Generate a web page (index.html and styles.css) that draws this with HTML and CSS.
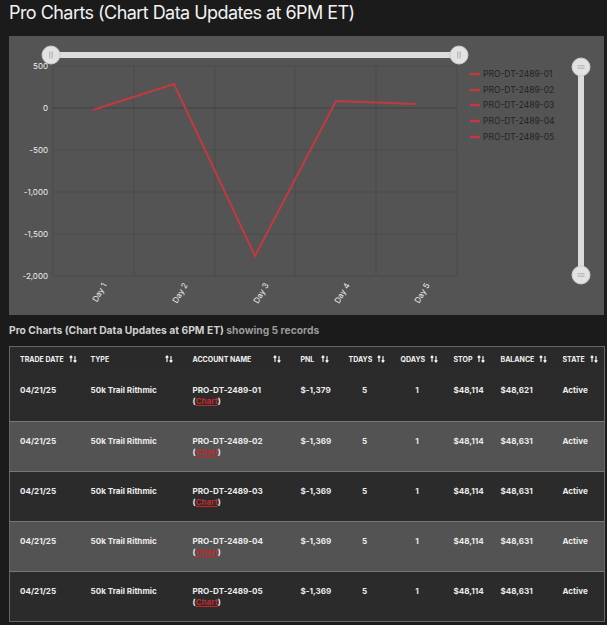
FILE: index.html
```html
<!DOCTYPE html>
<html lang="en">
<head>
  <meta charset="UTF-8">
  <title>Pro Charts</title>
  <link rel="stylesheet" href="styles.css">
</head>
<body>
  <h1>Pro Charts (Chart Data Updates at 6PM ET)</h1>

  <div class="chart-panel">
    <svg class="chart" width="595" height="279" viewBox="0 0 595 279">
      <!-- grid -->
      <g class="grid">
        <line x1="44" y1="30" x2="448" y2="30"/>
        <line x1="44" y1="114" x2="448" y2="114"/>
        <line x1="44" y1="156" x2="448" y2="156"/>
        <line x1="44" y1="198" x2="448" y2="198"/>
        <line x1="44" y1="240" x2="448" y2="240"/>
        <line x1="44" y1="30" x2="44" y2="240"/>
        <line x1="125" y1="30" x2="125" y2="240"/>
        <line x1="206" y1="30" x2="206" y2="240"/>
        <line x1="286" y1="30" x2="286" y2="240"/>
        <line x1="367" y1="30" x2="367" y2="240"/>
        <line x1="448" y1="30" x2="448" y2="240"/>
      </g>
      <line class="zero" x1="44" y1="72" x2="448" y2="72"/>

      <g class="y-labels">
        <text x="39" y="33">500</text>
        <text x="39" y="75">0</text>
        <text x="39" y="117">-500</text>
        <text x="39" y="159">-1,000</text>
        <text x="39" y="201">-1,500</text>
        <text x="39" y="243">-2,000</text>
      </g>

      <g class="x-labels">
        <text transform="translate(98 249) rotate(-60)">Day 1</text>
        <text transform="translate(179 249) rotate(-60)">Day 2</text>
        <text transform="translate(260 249) rotate(-60)">Day 3</text>
        <text transform="translate(341 249) rotate(-60)">Day 4</text>
        <text transform="translate(421 249) rotate(-60)">Day 5</text>
      </g>

      <polyline class="series" points="84,74 165,48 246,220 327,65 407,68"/>

      <!-- horizontal zoom slider -->
      <rect class="track" x="41" y="16" width="409" height="6" rx="3"/>
      <g class="handle">
        <circle cx="42" cy="19" r="9"/>
        <line x1="40.8" y1="15.5" x2="40.8" y2="22.5"/>
        <line x1="43.2" y1="15.5" x2="43.2" y2="22.5"/>
      </g>
      <g class="handle">
        <circle cx="450" cy="19" r="9"/>
        <line x1="448.8" y1="15.5" x2="448.8" y2="22.5"/>
        <line x1="451.2" y1="15.5" x2="451.2" y2="22.5"/>
      </g>

      <!-- legend -->
      <g class="legend">
        <line x1="461" y1="38" x2="471" y2="38"/>
        <text x="474" y="41">PRO-DT-2489-01</text>
        <line x1="461" y1="54" x2="471" y2="54"/>
        <text x="474" y="57">PRO-DT-2489-02</text>
        <line x1="461" y1="69" x2="471" y2="69"/>
        <text x="474" y="72">PRO-DT-2489-03</text>
        <line x1="461" y1="85" x2="471" y2="85"/>
        <text x="474" y="88">PRO-DT-2489-04</text>
        <line x1="461" y1="101" x2="471" y2="101"/>
        <text x="474" y="104">PRO-DT-2489-05</text>
      </g>

      <!-- vertical zoom slider -->
      <rect class="track" x="569" y="31" width="6" height="208" rx="3"/>
      <g class="handle">
        <circle cx="572" cy="31" r="9"/>
        <line x1="568.5" y1="29.8" x2="575.5" y2="29.8"/>
        <line x1="568.5" y1="32.2" x2="575.5" y2="32.2"/>
      </g>
      <g class="handle">
        <circle cx="572" cy="239" r="9"/>
        <line x1="568.5" y1="237.8" x2="575.5" y2="237.8"/>
        <line x1="568.5" y1="240.2" x2="575.5" y2="240.2"/>
      </g>
    </svg>
  </div>

  <p class="caption">Pro Charts (Chart Data Updates at 6PM ET) <span>showing 5 records</span></p>

  <table class="records">
    <colgroup>
      <col style="width:71px"><col style="width:102px"><col style="width:108px">
      <col style="width:48px"><col style="width:52px"><col style="width:53px">
      <col style="width:47px"><col style="width:62px"><col style="width:52px">
    </colgroup>
    <thead>
      <tr>
        <th><div class="th-in">Trade Date <svg class="sort" viewBox="0 0 8 8"><path d="M2 7V1M0.6 2.6L2 1l1.4 1.6M6 1v6M4.6 5.4L6 7l1.4-1.6"/></svg></div></th>
        <th><div class="th-in">Type <svg class="sort" viewBox="0 0 8 8"><path d="M2 7V1M0.6 2.6L2 1l1.4 1.6M6 1v6M4.6 5.4L6 7l1.4-1.6"/></svg></div></th>
        <th><div class="th-in">Account Name <svg class="sort" viewBox="0 0 8 8"><path d="M2 7V1M0.6 2.6L2 1l1.4 1.6M6 1v6M4.6 5.4L6 7l1.4-1.6"/></svg></div></th>
        <th><div class="th-in">PNL <svg class="sort" viewBox="0 0 8 8"><path d="M2 7V1M0.6 2.6L2 1l1.4 1.6M6 1v6M4.6 5.4L6 7l1.4-1.6"/></svg></div></th>
        <th><div class="th-in">TDays <svg class="sort" viewBox="0 0 8 8"><path d="M2 7V1M0.6 2.6L2 1l1.4 1.6M6 1v6M4.6 5.4L6 7l1.4-1.6"/></svg></div></th>
        <th><div class="th-in">QDays <svg class="sort" viewBox="0 0 8 8"><path d="M2 7V1M0.6 2.6L2 1l1.4 1.6M6 1v6M4.6 5.4L6 7l1.4-1.6"/></svg></div></th>
        <th><div class="th-in">Stop <svg class="sort" viewBox="0 0 8 8"><path d="M2 7V1M0.6 2.6L2 1l1.4 1.6M6 1v6M4.6 5.4L6 7l1.4-1.6"/></svg></div></th>
        <th><div class="th-in">Balance <svg class="sort" viewBox="0 0 8 8"><path d="M2 7V1M0.6 2.6L2 1l1.4 1.6M6 1v6M4.6 5.4L6 7l1.4-1.6"/></svg></div></th>
        <th><div class="th-in">State <svg class="sort" viewBox="0 0 8 8"><path d="M2 7V1M0.6 2.6L2 1l1.4 1.6M6 1v6M4.6 5.4L6 7l1.4-1.6"/></svg></div></th>
      </tr>
    </thead>
    <tbody>
      <tr>
        <td>04/21/25</td><td>50k Trail Rithmic</td>
        <td>PRO-DT-2489-01<br>(<a href="#">Chart</a>)</td>
        <td>$-1,379</td><td class="num">5</td><td class="num">1</td>
        <td>$48,114</td><td>$48,621</td><td>Active</td>
      </tr>
      <tr>
        <td>04/21/25</td><td>50k Trail Rithmic</td>
        <td>PRO-DT-2489-02<br>(<a href="#">Chart</a>)</td>
        <td>$-1,369</td><td class="num">5</td><td class="num">1</td>
        <td>$48,114</td><td>$48,631</td><td>Active</td>
      </tr>
      <tr>
        <td>04/21/25</td><td>50k Trail Rithmic</td>
        <td>PRO-DT-2489-03<br>(<a href="#">Chart</a>)</td>
        <td>$-1,369</td><td class="num">5</td><td class="num">1</td>
        <td>$48,114</td><td>$48,631</td><td>Active</td>
      </tr>
      <tr>
        <td>04/21/25</td><td>50k Trail Rithmic</td>
        <td>PRO-DT-2489-04<br>(<a href="#">Chart</a>)</td>
        <td>$-1,369</td><td class="num">5</td><td class="num">1</td>
        <td>$48,114</td><td>$48,631</td><td>Active</td>
      </tr>
      <tr>
        <td>04/21/25</td><td>50k Trail Rithmic</td>
        <td>PRO-DT-2489-05<br>(<a href="#">Chart</a>)</td>
        <td>$-1,369</td><td class="num">5</td><td class="num">1</td>
        <td>$48,114</td><td>$48,631</td><td>Active</td>
      </tr>
    </tbody>
  </table>
</body>
</html>
```

FILE: styles.css
```css
body {
  margin: 0;
  padding: 0 3px 0 9px;
  background-color: #1b1b1b;
  font-family: Inter, "Noto Sans", sans-serif;
  color: #ececec;
}

h1 {
  margin: 0;
  padding-top: 1px;
  font-size: 18px;
  font-weight: 400;
  letter-spacing: -0.55px;
  line-height: 24px;
  color: #f2f2f2;
}

.chart-panel {
  margin-top: 11px;
  height: 279px;
  background-color: #545454;
}

.chart {
  display: block;
}

.grid line {
  stroke: #4b4b4b;
  stroke-width: 1;
}

.zero {
  stroke: #404040;
  stroke-width: 1;
}

.y-labels text {
  font-size: 8px;
  fill: #eeeeee;
  text-anchor: end;
}

.x-labels text {
  font-size: 8px;
  fill: #eeeeee;
  text-anchor: end;
}

.series {
  fill: none;
  stroke: #c2393f;
  stroke-width: 2;
  stroke-linejoin: miter;
}

.track {
  fill: #dcdcdc;
}

.handle circle {
  fill: #e2e2e2;
  stroke: #cbcbcb;
  stroke-width: 1;
}

.handle line {
  stroke: #a0a0a0;
  stroke-width: 0.8;
}

.legend line {
  stroke: #c2393f;
  stroke-width: 2.5;
}

.legend text {
  font-size: 8.5px;
  fill: #242424;
}

.caption {
  margin: 8px 0 9px;
  font-size: 10.3px;
  font-weight: 700;
  line-height: 14px;
  color: #cfcfcf;
}

.caption span {
  color: #9a9a9a;
}

.records {
  width: 100%;
  table-layout: fixed;
  border-collapse: collapse;
  border: 1px solid #666;
}

.records th {
  height: 24px;
  padding: 0 10px;
  background-color: #2a2a2a;
  font-size: 7px;
  font-weight: 700;
  text-transform: uppercase;
  text-align: left;
  color: #f2f2f2;
  vertical-align: middle;
}

.th-in {
  display: flex;
  justify-content: space-between;
  align-items: center;
  gap: 5px;
  white-space: nowrap;
}

.sort {
  flex: none;
  width: 8px;
  height: 8px;
  fill: none;
  stroke: #f0f0f0;
  stroke-width: 1.2;
}

.records td {
  height: 50px;
  box-sizing: border-box;
  padding: 14px 10px 0;
  font-size: 8.1px;
  font-weight: 700;
  line-height: 11px;
  color: #ececec;
  vertical-align: top;
  border-top: 1px solid #767676;
}

.records tbody tr:first-child td {
  border-top: none;
}

.records tbody tr:nth-child(odd) {
  background-color: #2b2b2b;
}

.records tbody tr:nth-child(even) {
  background-color: #535353;
}

.records td.num {
  text-align: center;
}

.records a {
  color: #c0282e;
  text-decoration: underline;
}
```
